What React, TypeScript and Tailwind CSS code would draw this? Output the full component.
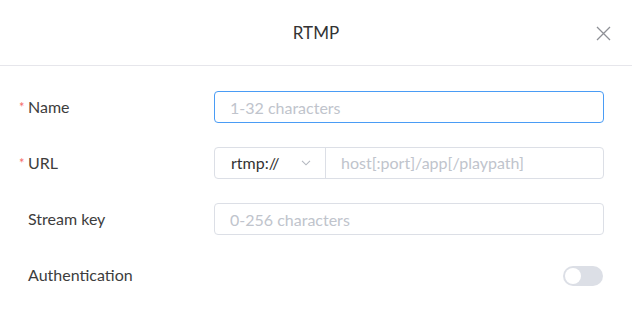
import React, { useState } from "react";

// Form row: label column on the left, control on the right
function Row({
  label,
  required,
  children,
}: {
  label: string;
  required?: boolean;
  children: React.ReactNode;
}) {
  return (
    <div className="flex h-[32px] items-center">
      <div className="flex w-[195px] shrink-0 items-center">
        <span className="w-[9px] text-[13px] leading-none text-[#f56c6c]">
          {required ? "*" : ""}
        </span>
        <span className="text-[16px] text-[#3d3d3d]">{label}</span>
      </div>
      <div className="flex-1">{children}</div>
    </div>
  );
}

export default function App() {
  const [auth, setAuth] = useState(false);

  return (
    <div className="h-[317px] w-[632px] bg-white font-['Lato',sans-serif]">
      {/* Header */}
      <div className="relative flex h-[66px] items-center justify-center border-b border-[#e6e6eb]">
        <h1 className="text-[17px] text-[#333]">RTMP</h1>
        <button className="absolute right-[21px] top-[25px] flex h-[16px] w-[16px] items-center justify-center text-[#8e9096]">
          <svg width="15" height="15" viewBox="0 0 15 15" fill="none">
            <path d="M1 1L14 14M14 1L1 14" stroke="currentColor" strokeWidth="1.3" />
          </svg>
        </button>
      </div>

      {/* Form */}
      <div className="flex flex-col gap-[24px] pl-[19px] pr-[28px] pt-[25px]">
        <Row label="Name" required>
          <input
            autoFocus
            placeholder="1-32 characters"
            className="h-[32px] w-full rounded-[4px] border border-[#4a9cf5] px-[15px] text-[16px] text-[#333] outline-none placeholder:text-[#c0c4cc]"
          />
        </Row>
        <Row label="URL" required>
          <div className="flex h-[32px] w-full rounded-[4px] border border-[#dcdfe6]">
            <div className="flex w-[111px] shrink-0 items-center justify-between border-r border-[#dcdfe6] pl-[16px] pr-[14px]">
              <span className="text-[16px] text-[#333]">rtmp://</span>
              <svg width="10" height="6" viewBox="0 0 10 6" fill="none" className="text-[#b4b8c0]">
                <path d="M1 0.8L5 4.8L9 0.8" stroke="currentColor" strokeWidth="1.1" />
              </svg>
            </div>
            <input
              placeholder="host[:port]/app[/playpath]"
              className="min-w-0 flex-1 px-[15px] text-[16px] text-[#333] outline-none placeholder:text-[#c0c4cc]"
            />
          </div>
        </Row>
        <Row label="Stream key">
          <input
            placeholder="0-256 characters"
            className="h-[32px] w-full rounded-[4px] border border-[#dcdfe6] px-[15px] text-[16px] text-[#333] outline-none placeholder:text-[#c0c4cc]"
          />
        </Row>
        <Row label="Authentication">
          <div className="flex justify-end pt-[2px] pr-[1px]">
            <button
              onClick={() => setAuth(!auth)}
              className={`flex h-[20px] w-[40px] items-center rounded-full p-[2px] ${
                auth ? "justify-end bg-[#409eff]" : "justify-start bg-[#dcdfe6]"
              }`}
            >
              <span className="h-[16px] w-[16px] rounded-full bg-white" />
            </button>
          </div>
        </Row>
      </div>
    </div>
  );
}
